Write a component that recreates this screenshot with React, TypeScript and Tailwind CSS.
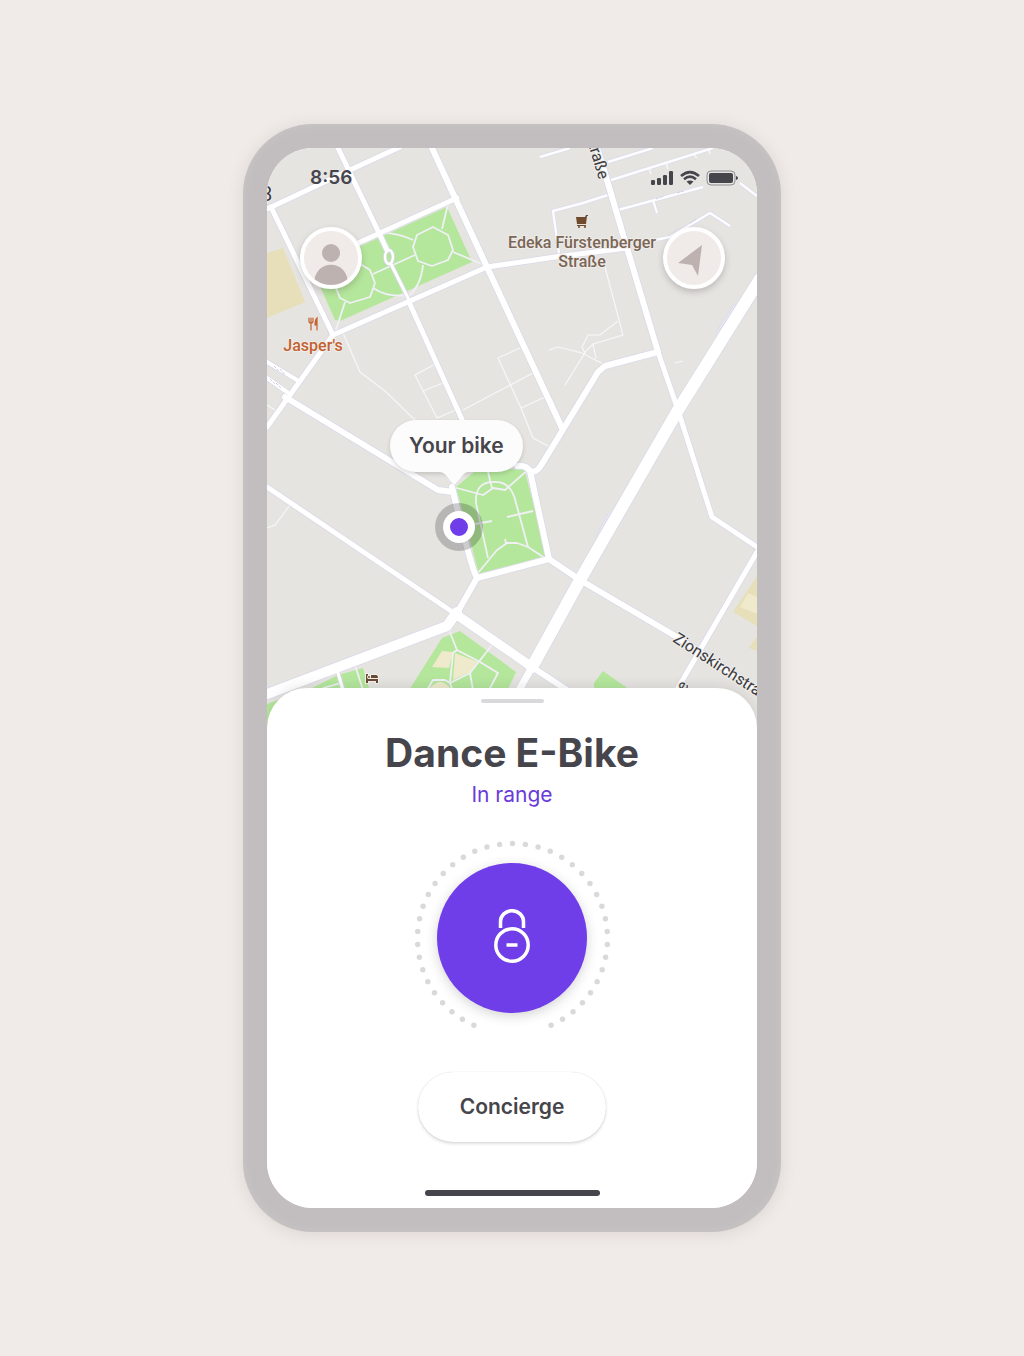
import React from "react";

const minorRoads = [
  "M540 157L570 148",
  "M608 162L653 148",
  "M608 181L713 148",
  "M618 210L703 187",
  "M653 200L657 213",
  "M559 254L553 211L583 203L608 195",
  "M655 240L670 237L710 213L730 226",
  "M740 183L757 196",
];

const driveways = "M649 168L651 174M666 163L668 169M693 154L697 158M709 150L710 154";

const footpaths = [
  "M605 267L623 335L593 344L586 351L565 385",
  "M618 321L600 335L588 335L582 347L585 353",
  "M549 350L558 347L582 353L605 365M593 344L596 358",
  "M520 348L498 358L521 408L533 438L550 447",
  "M463 410L533 373M521 408L545 397",
  "M437 363L415 375L437 418L460 408M423 391L443 383",
  "M343 333L360 372L385 391L415 420",
  "M267 405L275 410M290 505L275 525L267 528M675 363L683 361",
];

const parkPaths = [
  "M413 247L417 235L433 227L448 235L453 250L448 260L432 266L418 261Z",
  "M362 265L370 270L375 283L370 297L350 303L340 298L336 288L338 272Z",
  "M448 204L442 229M453 252L482 264M413 240Q395 232 380 233",
  "M373 274L415 255M423 265Q421 286 408 297M373 288Q388 298 408 295M345 302L335 333",
  "M453 487L483 495L493 488L505 490L530 468M488 472L492 488",
  "M488 558L476 503Q475 482 493 482Q511 480 516 503L528 547",
  "M475 524L492 521M507 517L533 511",
  "M478 573L497 550L507 543L517 543L528 547L548 560M505 539L506 543",
  "M449 630L457 650L453 653L450 683L453 692M457 650L480 662L498 673L490 688",
  "M492 645L470 673L450 683L445 680L433 680L427 690M470 673L473 690",
  "M355 665L363 690M323 688L341 683",
];

const roads: [string, number][] = [
  ["M267 362L297 380", 4],
  ["M267 378L287 392", 4],
  ["M267 209L350 170L400 147", 5],
  ["M338 148L379 233L387 250", 5],
  ["M391 264L409 300", 3],
  ["M409 302L464 424", 5],
  ["M432 148L487 267L562 428", 6],
  ["M301 269L457 198", 5],
  ["M333 335L487 267", 5],
  ["M487 267L555 257L627 248", 5],
  ["M271 207L333 335L267 427", 5],
  ["M597 148L607 180L627 248L658 352", 6],
  ["M658 352L678 410L712 517L757 547", 5],
  ["M658 352L605 366L598 372L542 464Q536 474 530 471Q526 465 517 466", 6],
  ["M530 471L549 559L477 578Q471 568 452 487", 6],
  ["M477 578L457 613", 6],
  ["M285 397L438 490L453 492", 6],
  ["M267 487L457 615", 5],
  ["M457 615L532 667", 9],
  ["M532 667L567 690", 6],
  ["M457 612L447 626L267 694", 10],
  ["M549 559L580 580L677 637L757 690", 6],
  ["M757 552L678 688", 5],
  ["M532 667L518 692", 7],
  ["M338 673L343 690", 3],
  ["M760 279L678 410L580 580L532 667", 12],
];

function StreetMap() {
  return (
    <svg
      className="absolute inset-0 h-full w-full"
      viewBox="267 148 490 580"
      preserveAspectRatio="xMinYMin slice"
      fill="none"
      aria-hidden="true"
    >
      <rect x="267" y="148" width="490" height="580" fill="#e5e4e1" />
      <g fill="#b4e79c">
        <path d="M312 268L447 207L472 262L340 321L335 320Z" />
        <path d="M456 487L474 472L524 468L547 556L479 574Z" />
        <path d="M404 698L442 638L460 631L516 672L504 698Z" />
        <path d="M267 704L312 688L338 675L363 668L372 698L267 728Z" />
        <path d="M594 683L603 671L630 690L594 698Z" />
      </g>
      <g fill="#e7dfb9">
        <path d="M267 253L283 248L305 302L267 318Z" />
        <path d="M757 576L733 612L757 626ZM757 636L749 648L757 651Z" />
      </g>
      <g fill="#eeeacb">
        <path d="M748 593L740 607L757 614V597Z" />
        <path d="M442 651L453 652L449 668L432 667ZM455 653L478 662L470 672L453 680ZM428 690Q438 678 446 684L452 690Z" />
      </g>
      <g stroke="#f7f7fa" strokeWidth="1.2">
        {footpaths.map((d) => (
          <path key={d} d={d} />
        ))}
      </g>
      <g stroke="#f0f0f6" strokeWidth="1.8" strokeLinejoin="round">
        {parkPaths.map((d) => (
          <path key={d} d={d} />
        ))}
      </g>
      <g strokeLinejoin="round">
        {minorRoads.map((d) => (
          <path key={d} d={d} stroke="#dcdcec" strokeWidth="4" />
        ))}
        <path d={driveways} stroke="#f7f7fb" strokeWidth="1.5" />
        {minorRoads.map((d) => (
          <path key={d} d={d} stroke="#fdfdff" strokeWidth="2.4" />
        ))}
        <path d="M717 333L735 305M597 537L610 512" stroke="#dcdcec" strokeWidth="3" />
        <path d="M717 333L735 305M597 537L610 512" stroke="#eeeef5" strokeWidth="1" />
      </g>
      <g strokeLinejoin="round" strokeLinecap="round">
        {roads.map(([d, w]) => (
          <path key={d} d={d} stroke="#dadae9" strokeWidth={w + 1.6} />
        ))}
        <ellipse cx="389" cy="257" rx="4" ry="7" stroke="#d6d6e8" strokeWidth="4" />
        {roads.map(([d, w]) => (
          <path key={d} d={d} stroke="#ffffff" strokeWidth={w} />
        ))}
        <ellipse cx="389" cy="257" rx="4" ry="7" stroke="#ffffff" strokeWidth="2.4" />
      </g>
      <path
        d="M274 366l5 5M280 369l5 6M270 379l5 5M276 383l5 5M656 199l8-3M677 193l7-2M690 223l6-4"
        stroke="#cfcfe0"
        strokeWidth="1"
        strokeDasharray="3 1"
      />

      <g
        fontFamily="Roboto, sans-serif"
        fontSize="16"
        stroke="#eeedea"
        strokeWidth="2"
        strokeLinejoin="round"
        paintOrder="stroke"
      >
        <g fill="#3b3b3f">
          <text transform="translate(599 180) rotate(73)" textAnchor="end">Straße</text>
          <text transform="translate(672 641) rotate(33)">Zionskirchstraße</text>
          <text transform="translate(689 685) rotate(-60)" textAnchor="end">Straße</text>
          <text x="261" y="201" fontSize="20">8</text>
        </g>
        <g fill="#7b6555" fontWeight="500" textAnchor="middle">
          <text x="582" y="248">Edeka Fürstenberger</text>
          <text x="582" y="267">Straße</text>
        </g>
        <text x="313" y="351" fill="#c5612f" fontWeight="500" textAnchor="middle">
          Jasper's
        </text>
      </g>

      <g fill="#6f4a2c">
        <path d="M576 217H585L586 215H588V216H587L586 224H577Z" />
        <path d="M577 225H586V226H577Z" />
        <circle cx="579" cy="227" r="1" />
        <circle cx="585" cy="227" r="1" />
      </g>
      <g stroke="#c5612f" strokeWidth="1.2" strokeLinecap="round">
        <path d="M309 318V321Q309 323 311 323Q313 323 313 321V318M311 318V330" />
        <path d="M317 330V318Q315 320 315 325H317" fill="#c5612f" />
      </g>
      <g fill="#6b4a33" stroke="#f3f1ee" strokeWidth="2" paintOrder="stroke">
        <path d="M366 674H368V679H378V683H376V681H368V683H366Z" />
        <path d="M371 675H376Q378 675 378 678H371Z" />
        <circle cx="369" cy="677" r="1" />
      </g>
    </svg>
  );
}

function StatusIcons() {
  return (
    <svg className="h-4 w-[88px]" viewBox="0 0 88 16" fill="#46454b" aria-hidden="true">
      <rect x="0" y="10" width="4" height="5" rx="1.3" />
      <rect x="6" y="8" width="4" height="7" rx="1.3" />
      <rect x="12" y="5" width="4" height="10" rx="1.3" />
      <rect x="18" y="1" width="4" height="14" rx="1.3" />
      <g fill="none" stroke="#46454b" strokeWidth="2.6">
        <path d="M30 6Q39 -1.8 48 6" />
        <path d="M33 9.2Q39 4.2 45 9.2" />
      </g>
      <path d="M35.5 11.6Q39 9.2 42.5 11.6L39 15Z" />
      <rect x="56" y="1" width="28" height="14" rx="4" fill="none" stroke="#8f8d92" />
      <rect x="58" y="3" width="24" height="10" rx="2" />
      <path d="M85 6Q87 6.500 87 8Q87 9.500 85 10Z" />
    </svg>
  );
}

function DotRing() {
  const dots = Array.from({ length: 41 }, (_, i) => {
    const a = ((i - 20) * 7.8 * Math.PI) / 180;
    return [100.5 + 95 * Math.sin(a), 100.5 - 95 * Math.cos(a)];
  });
  return (
    <svg className="absolute inset-0 h-full w-full" viewBox="0 0 200 200" fill="#d9d9db" aria-hidden="true">
      {dots.map(([x, y]) => (
        <circle key={x} cx={x} cy={y} r="2.7" />
      ))}
    </svg>
  );
}

const roundButton =
  "flex size-[62px] items-center justify-center overflow-hidden rounded-full border-4 border-white bg-[#f0ebe8] shadow-[0_3px_6px_rgba(70,60,60,0.25)]";

export default function App() {
  return (
    <main className="flex min-h-screen items-center justify-center bg-[#f0ebe8] font-['Inter',sans-serif] text-[#46454b]">
      <div className="w-full max-w-[538px] rounded-[70px] bg-[#c2bdbe] p-6 shadow-[0_2px_16px_rgba(120,100,100,0.16),inset_0_0_12px_rgba(255,255,255,0.14)]">
        <div className="overflow-hidden rounded-[46px] bg-white">
          <section className="relative min-h-[580px]" aria-label="Map">
            <StreetMap />
            <header className="relative flex items-center justify-between pt-4 pr-[18px] pl-[43px]">
              <time className="text-[19px] leading-7 font-semibold">8:56</time>
              <StatusIcons />
            </header>
            <div className="relative mt-[35px] flex justify-between pr-8 pl-[33px]">
              <button type="button" aria-label="Profile" className={roundButton}>
                <svg className="size-full" viewBox="0 0 54 54" fill="#beb2b1" aria-hidden="true">
                  <circle cx="27" cy="22" r="9" />
                  <path d="M10 54C9 27 45 27 44 54Z" />
                </svg>
              </button>
              <button type="button" aria-label="My location" className={roundButton}>
                <svg className="size-full" viewBox="0 0 54 54" fill="#beb2b1" aria-hidden="true">
                  <path d="M35 14L11 32L25 34L31 45Z" />
                </svg>
              </button>
            </div>

            <div className="absolute top-[272px] left-[123px] rounded-full bg-[#fcfcfc] px-[19px] py-3 text-[21px] leading-7 font-semibold shadow-[0_2px_4px_rgba(60,60,60,0.2)]">
              Your bike
              <svg className="absolute top-full left-[50px] h-4 w-7" viewBox="0 0 28 16" fill="#fcfcfc" aria-hidden="true">
                <path d="M0 0Q3 0 6 3L12 11Q14 14 16 11L22 4Q25 0 28 0Z" />
              </svg>
            </div>
            <div className="absolute top-[355px] left-[168px] flex size-12 items-center justify-center rounded-full bg-black/20">
              <div className="size-8 rounded-full border-[7px] border-white bg-[#703ee8]" />
            </div>
          </section>

          <section className="relative -mt-10 flex flex-col items-center rounded-t-[40px] bg-white pt-[11px] pb-3 shadow-[0_-2px_12px_rgba(60,60,60,0.12)]">
            <div className="h-1 w-[63px] rounded-full bg-[#d9d9db]" />
            <h1 className="mt-[26px] text-[39px] leading-[48px] font-bold">Dance E-Bike</h1>
            <p className="mt-1 text-[21px] leading-7 text-[#6a3bd9]">In range</p>
            <div className="relative mt-[29px] flex size-[200px] items-center justify-center">
              <DotRing />
              <button
                type="button"
                aria-label="Unlock bike"
                className="relative flex size-[150px] items-center justify-center rounded-full bg-[#703ee8] pb-1 shadow-[0_3px_12px_rgba(60,60,60,0.22)]"
              >
                <svg className="h-[54px] w-9" viewBox="0 0 36 54" fill="none" stroke="#ffffff" strokeWidth="3.500" aria-hidden="true">
                  <circle cx="18" cy="36" r="16.200" />
                  <path d="M6.500 19V12.500A11.500 10.800 0 0 1 29.500 12.500V19" />
                  <path d="M12.500 36H23.500" />
                </svg>
              </button>
            </div>
            <button
              type="button"
              className="mt-[34px] rounded-full bg-white px-[42px] py-[21px] text-[21px] leading-7 font-semibold shadow-[0_0_1px_rgba(60,60,60,0.25),0_2px_3px_rgba(60,60,60,0.16)]"
            >
              Concierge
            </button>
            <div className="mt-12 h-1.5 w-[175px] rounded-full bg-[#46454b]" />
          </section>
        </div>
      </div>
    </main>
  );
}
